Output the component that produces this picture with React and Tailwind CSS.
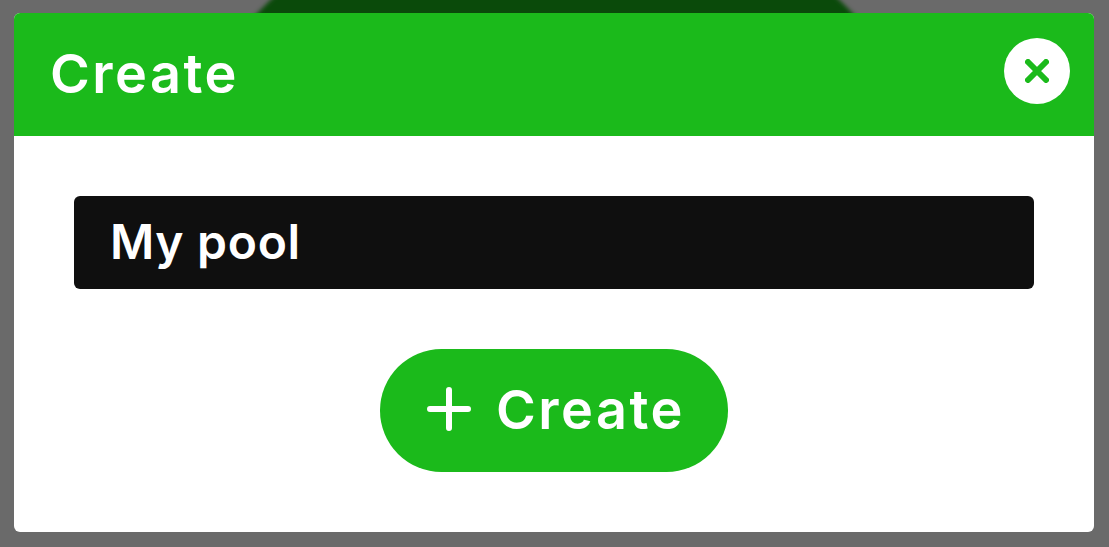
import React from 'react';

const App = () => {
  return (
    <div className="relative h-[547px] w-full overflow-hidden bg-[#6a6a6a] pt-[13px] pl-[14px] font-['Inter',sans-serif]">
      {/* blurred bit of the page behind the dialog */}
      <div className="absolute left-0 top-0 h-[20px] w-full overflow-hidden">
        <div className="ml-[143px] mt-[-114px] h-[824px] w-[824px] rounded-full bg-[#0a4a0a] blur-[2px]" />
      </div>

      <div className="relative flex h-[519px] w-[1080px] flex-col overflow-hidden rounded-[6px] bg-white">
        <div className="flex h-[123px] items-center justify-between bg-[#1bba1b] pl-[36px] pr-[24px]">
          <h2 className="mb-[2px] text-[54px] font-semibold leading-none tracking-[2.5px] text-white">Create</h2>
          <button className="mb-[7px] flex h-[66px] w-[66px] items-center justify-center rounded-full bg-white">
            <svg width="24" height="24" viewBox="0 0 24 24" fill="none" stroke="#1bba1b" strokeWidth="6" strokeLinecap="round">
              <path d="M3 3l18 18M21 3L3 21" />
            </svg>
          </button>
        </div>

        <div className="flex flex-1 flex-col items-center px-[60px] pt-[60px]">
          <div className="flex h-[93px] w-full items-center rounded-[6px] bg-[#0f0f0f] pl-[36px]">
            <span className="mb-[2px] text-[48px] font-semibold leading-none tracking-[0.7px] text-white">My pool</span>
          </div>

          <button className="mt-[60px] flex h-[123px] w-[348px] items-center rounded-full bg-[#1bba1b] pl-[47px]">
            <svg className="mb-[4px]" width="44" height="44" viewBox="0 0 44 44" fill="none" stroke="white" strokeWidth="6" strokeLinecap="round">
              <path d="M22 3v38M3 22h38" />
            </svg>
            <span className="mb-[2px] ml-[25px] text-[54px] font-semibold leading-none tracking-[2.5px] text-white">Create</span>
          </button>
        </div>
      </div>
    </div>
  );
};

export default App;
